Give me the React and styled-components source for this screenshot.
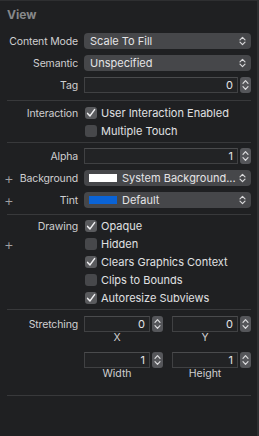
import React from "react";
import styled, { createGlobalStyle } from "styled-components";

const Global = createGlobalStyle`
  html, body {
    margin: 0;
    padding: 0;
    background: #1f2022;
  }
  body {
    font-family: "Inter", "Liberation Sans", sans-serif;
    -webkit-font-smoothing: antialiased;
  }
`;

const Panel = styled.div`
  position: relative;
  box-sizing: border-box;
  width: 259px;
  height: 436px;
  background: #1f2022;
  border-top: 1px solid #2e2f31;
  border-right: 2px solid #2e2f31;
  overflow: hidden;
`;

const Header = styled.div`
  height: 27px;
  padding-left: 7px;
  display: flex;
  align-items: center;
  font-size: 12px;
  font-weight: 700;
  color: #87888a;
`;

const Section = styled.div`
  display: grid;
  grid-template-columns: 78px 167px;
  column-gap: 6px;
  row-gap: ${(p) => p.$gap ?? 0}px;
  padding: ${(p) => p.$pad || "0"};
`;

const Divider = styled.div`
  height: 1px;
  margin: 0 6px 0 7px;
  background: #38393b;
`;

const Label = styled.div`
  display: flex;
  align-items: center;
  height: ${(p) => p.$h || 16}px;
  font-size: 10.5px;
  letter-spacing: -0.15px;
  color: #cfcfd1;
  white-space: nowrap;
`;

const LabelText = styled.span`
  margin-left: auto;
`;

const Plus = styled.span`
  padding-left: 4px;
  font-size: 15px;
  font-weight: 300;
  color: #a0a0a2;
  line-height: 1;
`;

const Popup = styled.div`
  box-sizing: border-box;
  height: 16px;
  border-radius: 4px;
  background: #46474a;
  display: flex;
  align-items: center;
  padding: 0 5px 0 6px;
  font-size: 11px;
  color: #e4e4e6;
  white-space: nowrap;
  overflow: hidden;
  svg {
    margin-left: auto;
    flex-shrink: 0;
  }
`;

const Swatch = styled.div`
  width: 28px;
  height: 8px;
  background: ${(p) => p.$color};
  margin: 0 5px 0 -1px;
  flex-shrink: 0;
`;

const FieldRow = styled.div`
  display: flex;
  align-items: center;
  gap: 2px;
  height: 16px;
`;

const Field = styled.div`
  box-sizing: border-box;
  flex: 1;
  height: 16px;
  background: #222325;
  border: 1px solid #404143;
  border-top-color: #4a4b4d;
  display: flex;
  align-items: center;
  justify-content: flex-end;
  padding-right: 4px;
  font-size: 11px;
  color: #e4e4e6;
`;

const StepperBox = styled.div`
  width: 11px;
  height: 16px;
  border-radius: 3px;
  background: #55565a;
  display: flex;
  align-items: center;
  justify-content: center;
  flex-shrink: 0;
`;

const Check = styled.label`
  display: flex;
  align-items: center;
  height: 18px;
  gap: 4px;
  font-size: 11px;
  color: #e0e0e2;
  white-space: nowrap;
`;

const Box = styled.span`
  width: 12px;
  height: 12px;
  margin-left: 1px;
  border-radius: 3px;
  background: ${(p) => (p.$on ? "#5a5b5e" : "#47484b")};
  display: flex;
  align-items: center;
  justify-content: center;
`;

const Pair = styled.div`
  display: grid;
  grid-template-columns: 1fr 1fr;
  column-gap: 9px;
`;

const Cell = styled.div`
  display: flex;
  flex-direction: column;
`;

const Caption = styled.div`
  height: 12px;
  padding-right: 13px;
  text-align: center;
  font-size: 10.5px;
  line-height: 12px;
  color: #cfcfd1;
  margin-bottom: ${(p) => p.$mb || 0}px;
`;

const UpDown = () => (
  <svg width="7" height="10" viewBox="0 0 7 10">
    <path d="M1 3.8 L3.5 1.3 L6 3.8 M1 6.2 L3.5 8.7 L6 6.2" fill="none" stroke="#d8d8da" strokeWidth="1.2" strokeLinecap="round" strokeLinejoin="round" />
  </svg>
);

const Stepper = () => (
  <StepperBox>
    <svg width="7" height="12" viewBox="0 0 7 12">
      <path d="M1 4.3 L3.5 1.6 L6 4.3 M1 7.7 L3.5 10.4 L6 7.7" fill="none" stroke="#dcdcde" strokeWidth="1.2" strokeLinecap="round" strokeLinejoin="round" />
    </svg>
  </StepperBox>
);

const Tick = () => (
  <svg width="10" height="10" viewBox="0 0 10 10">
    <path d="M1.6 5.4 L4 7.9 L8.6 1.6" fill="none" stroke="#f2f2f4" strokeWidth="1.5" strokeLinecap="round" strokeLinejoin="round" />
  </svg>
);

const CheckItem = ({ on, children }) => (
  <Check>
    <Box $on={on}>{on && <Tick />}</Box>
    {children}
  </Check>
);

const NumField = ({ value }) => (
  <FieldRow>
    <Field>{value}</Field>
    <Stepper />
  </FieldRow>
);

const RowLabel = ({ plus, h, children }) => (
  <Label $h={h}>
    {plus && <Plus>+</Plus>}
    {children && <LabelText>{children}</LabelText>}
  </Label>
);

export default function App() {
  return (
    <>
      <Global />
      <Panel>
        <Header>View</Header>
        <Section $gap={6} $pad="5px 0 7px 0">
          <RowLabel>Content Mode</RowLabel>
          <Popup>Scale To Fill<UpDown /></Popup>
          <RowLabel>Semantic</RowLabel>
          <Popup>Unspecified<UpDown /></Popup>
          <RowLabel>Tag</RowLabel>
          <NumField value="0" />
        </Section>
        <Divider />
        <Section $pad="3px 0 2px 0">
          <RowLabel h={18}>Interaction</RowLabel>
          <CheckItem on>User Interaction Enabled</CheckItem>
          <RowLabel h={18} />
          <CheckItem>Multiple Touch</CheckItem>
        </Section>
        <Divider />
        <Section $gap={6} $pad="5px 0 6px 0">
          <RowLabel>Alpha</RowLabel>
          <NumField value="1" />
          <RowLabel plus>Background</RowLabel>
          <Popup>
            <Swatch $color="#ffffff" />
            System Background...
            <UpDown />
          </Popup>
          <RowLabel plus>Tint</RowLabel>
          <Popup>
            <Swatch $color="#0a63d6" />
            Default
            <UpDown />
          </Popup>
        </Section>
        <Divider />
        <Section $pad="2px 0 2px 0">
          <RowLabel h={18}>Drawing</RowLabel>
          <CheckItem on>Opaque</CheckItem>
          <RowLabel h={18} plus />
          <CheckItem>Hidden</CheckItem>
          <RowLabel h={18} />
          <CheckItem on>Clears Graphics Context</CheckItem>
          <RowLabel h={18} />
          <CheckItem>Clips to Bounds</CheckItem>
          <RowLabel h={18} />
          <CheckItem on>Autoresize Subviews</CheckItem>
        </Section>
        <Divider />
        <Section $pad="6px 0 15px 0">
          <RowLabel>Stretching</RowLabel>
          <Pair>
            <Cell>
              <NumField value="0" />
              <Caption $mb={8}>X</Caption>
              <NumField value="1" />
              <Caption>Width</Caption>
            </Cell>
            <Cell>
              <NumField value="0" />
              <Caption $mb={8}>Y</Caption>
              <NumField value="1" />
              <Caption>Height</Caption>
            </Cell>
          </Pair>
        </Section>
        <Divider />
      </Panel>
    </>
  );
}
